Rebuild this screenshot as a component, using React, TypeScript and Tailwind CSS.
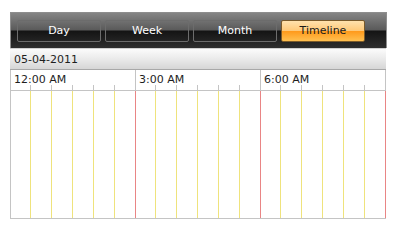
import React from "react";

const SUB = [20, 21, 21, 21, 21];
const COLS = [20, 21, 21, 21, 21, 21];
const HOURS = ["12:00 AM", "3:00 AM", "6:00 AM"];
const VIEWS = ["Day", "Week", "Month", "Timeline"];

export default function App() {
  return (
    <div className="w-[396px] h-[230px] bg-white overflow-hidden" style={{ fontFamily: '"DejaVu Sans", Verdana, sans-serif' }}>
      <div className="ml-[10px] pt-[12px] w-[377px]">
        {/* toolbar */}
        <div className="h-[36px] border border-b-0 border-[#8e8e8e] bg-[linear-gradient(to_bottom,#858585_0%,#5a5a5a_48%,#141414_52%,#2e2e2e_100%)] flex gap-[4px] pl-[6px] pt-[7px]">
          {VIEWS.map((v) =>
            v === "Timeline" ? (
              <div
                key={v}
                className="w-[84px] h-[22px] rounded-[2px] border border-[#7a5a2a] bg-[linear-gradient(to_bottom,#ffe1ad_0%,#ffc979_48%,#ff9a1c_52%,#ffc050_100%)] flex items-center justify-center text-[11px] text-[#1a1a1a]"
              >
                {v}
              </div>
            ) : (
              <div
                key={v}
                className="w-[84px] h-[22px] rounded-[2px] border border-[#6c6c6c] flex items-center justify-center text-[11px] text-white"
              >
                {v}
              </div>
            )
          )}
        </div>
        {/* date bar */}
        <div className="w-[376px] h-[22px] border-t border-[#d0d0d0] border-b border-b-[#a8a8a8] bg-[linear-gradient(to_bottom,#fbfbfb_0%,#eaeaea_50%,#d6d6d6_100%)] flex items-center pl-[4px] pt-[2px] text-[11px] text-[#1e1e1e]">
          05-04-2011
        </div>
        {/* time header */}
        <div className="w-[376px] h-[21px] flex border-l border-b border-[#c4c4c4]">
          {HOURS.map((h) => (
            <div key={h} className="w-[125px] h-[20px] border-r border-[#c4c4c4] flex flex-col">
              <div className="flex-1 pl-[3px] pt-[4px] text-[11px] leading-[11px] text-[#1e1e1e]">{h}</div>
              <div className="h-[5px] flex">
                {SUB.map((w, i) => (
                  <div key={i} className="h-[5px] border-r border-[#c4c4c4]" style={{ width: w }} />
                ))}
              </div>
            </div>
          ))}
        </div>
        {/* body */}
        <div className="w-[376px] h-[128px] flex border-l border-b border-[#c4c4c4]">
          {HOURS.map((h) => (
            <div key={h} className="flex h-[127px]">
              {COLS.map((w, i) =>
                i === 5 ? (
                  <div key={i} className="h-[127px] border-r border-[#e98585]" style={{ width: w }} />
                ) : (
                  <div key={i} className="h-[127px] border-r border-[#efe37c]" style={{ width: w }} />
                )
              )}
            </div>
          ))}
        </div>
      </div>
    </div>
  );
}
